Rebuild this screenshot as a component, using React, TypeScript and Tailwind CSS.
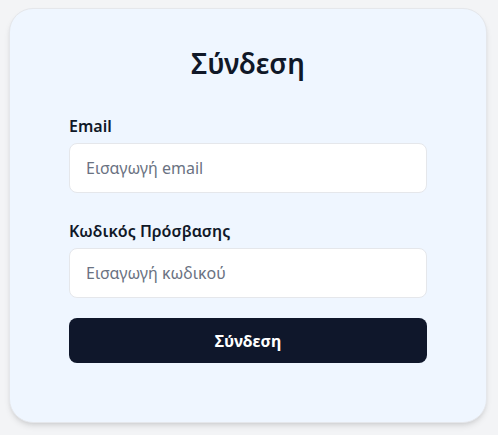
import React, { useState } from 'react';

export default function App() {
  const [email, setEmail] = useState('');
  const [password, setPassword] = useState('');

  return (
    <div className="min-h-screen bg-gray-100 px-[9px] pt-[8px] font-['Noto_Sans',sans-serif]">
      <div className="w-[478px] h-[415px] bg-blue-50 border border-gray-200 rounded-3xl shadow-md px-[59px] pt-[36px]">
        {/* Title */}
        <h1 className="text-center text-[28px] leading-[36px] font-semibold text-gray-900 mb-[34px]">Σύνδεση</h1>

        <form onSubmit={(e) => e.preventDefault()}>
          <div className="mb-[27px]">
            <label className="block text-[16px] leading-[22px] font-semibold text-gray-900 mb-[6px]">Email</label>
            <input
              type="email"
              value={email}
              onChange={(e) => setEmail(e.target.value)}
              placeholder="Εισαγωγή email"
              className="w-full h-[50px] px-4 bg-white border border-gray-200 rounded-lg text-[16px] text-gray-900 placeholder-gray-500 outline-none"
            />
          </div>

          <div className="mb-[20px]">
            <label className="block text-[16px] leading-[22px] font-semibold text-gray-900 mb-[6px]">Κωδικός Πρόσβασης</label>
            <input
              type="password"
              value={password}
              onChange={(e) => setPassword(e.target.value)}
              placeholder="Εισαγωγή κωδικού"
              className="w-full h-[50px] px-4 bg-white border border-gray-200 rounded-lg text-[16px] text-gray-900 placeholder-gray-500 outline-none"
            />
          </div>

          <button
            type="submit"
            className="w-full h-[45px] bg-slate-900 text-white rounded-lg text-[16px] font-bold"
          >
            Σύνδεση
          </button>
        </form>
      </div>
    </div>
  );
}
